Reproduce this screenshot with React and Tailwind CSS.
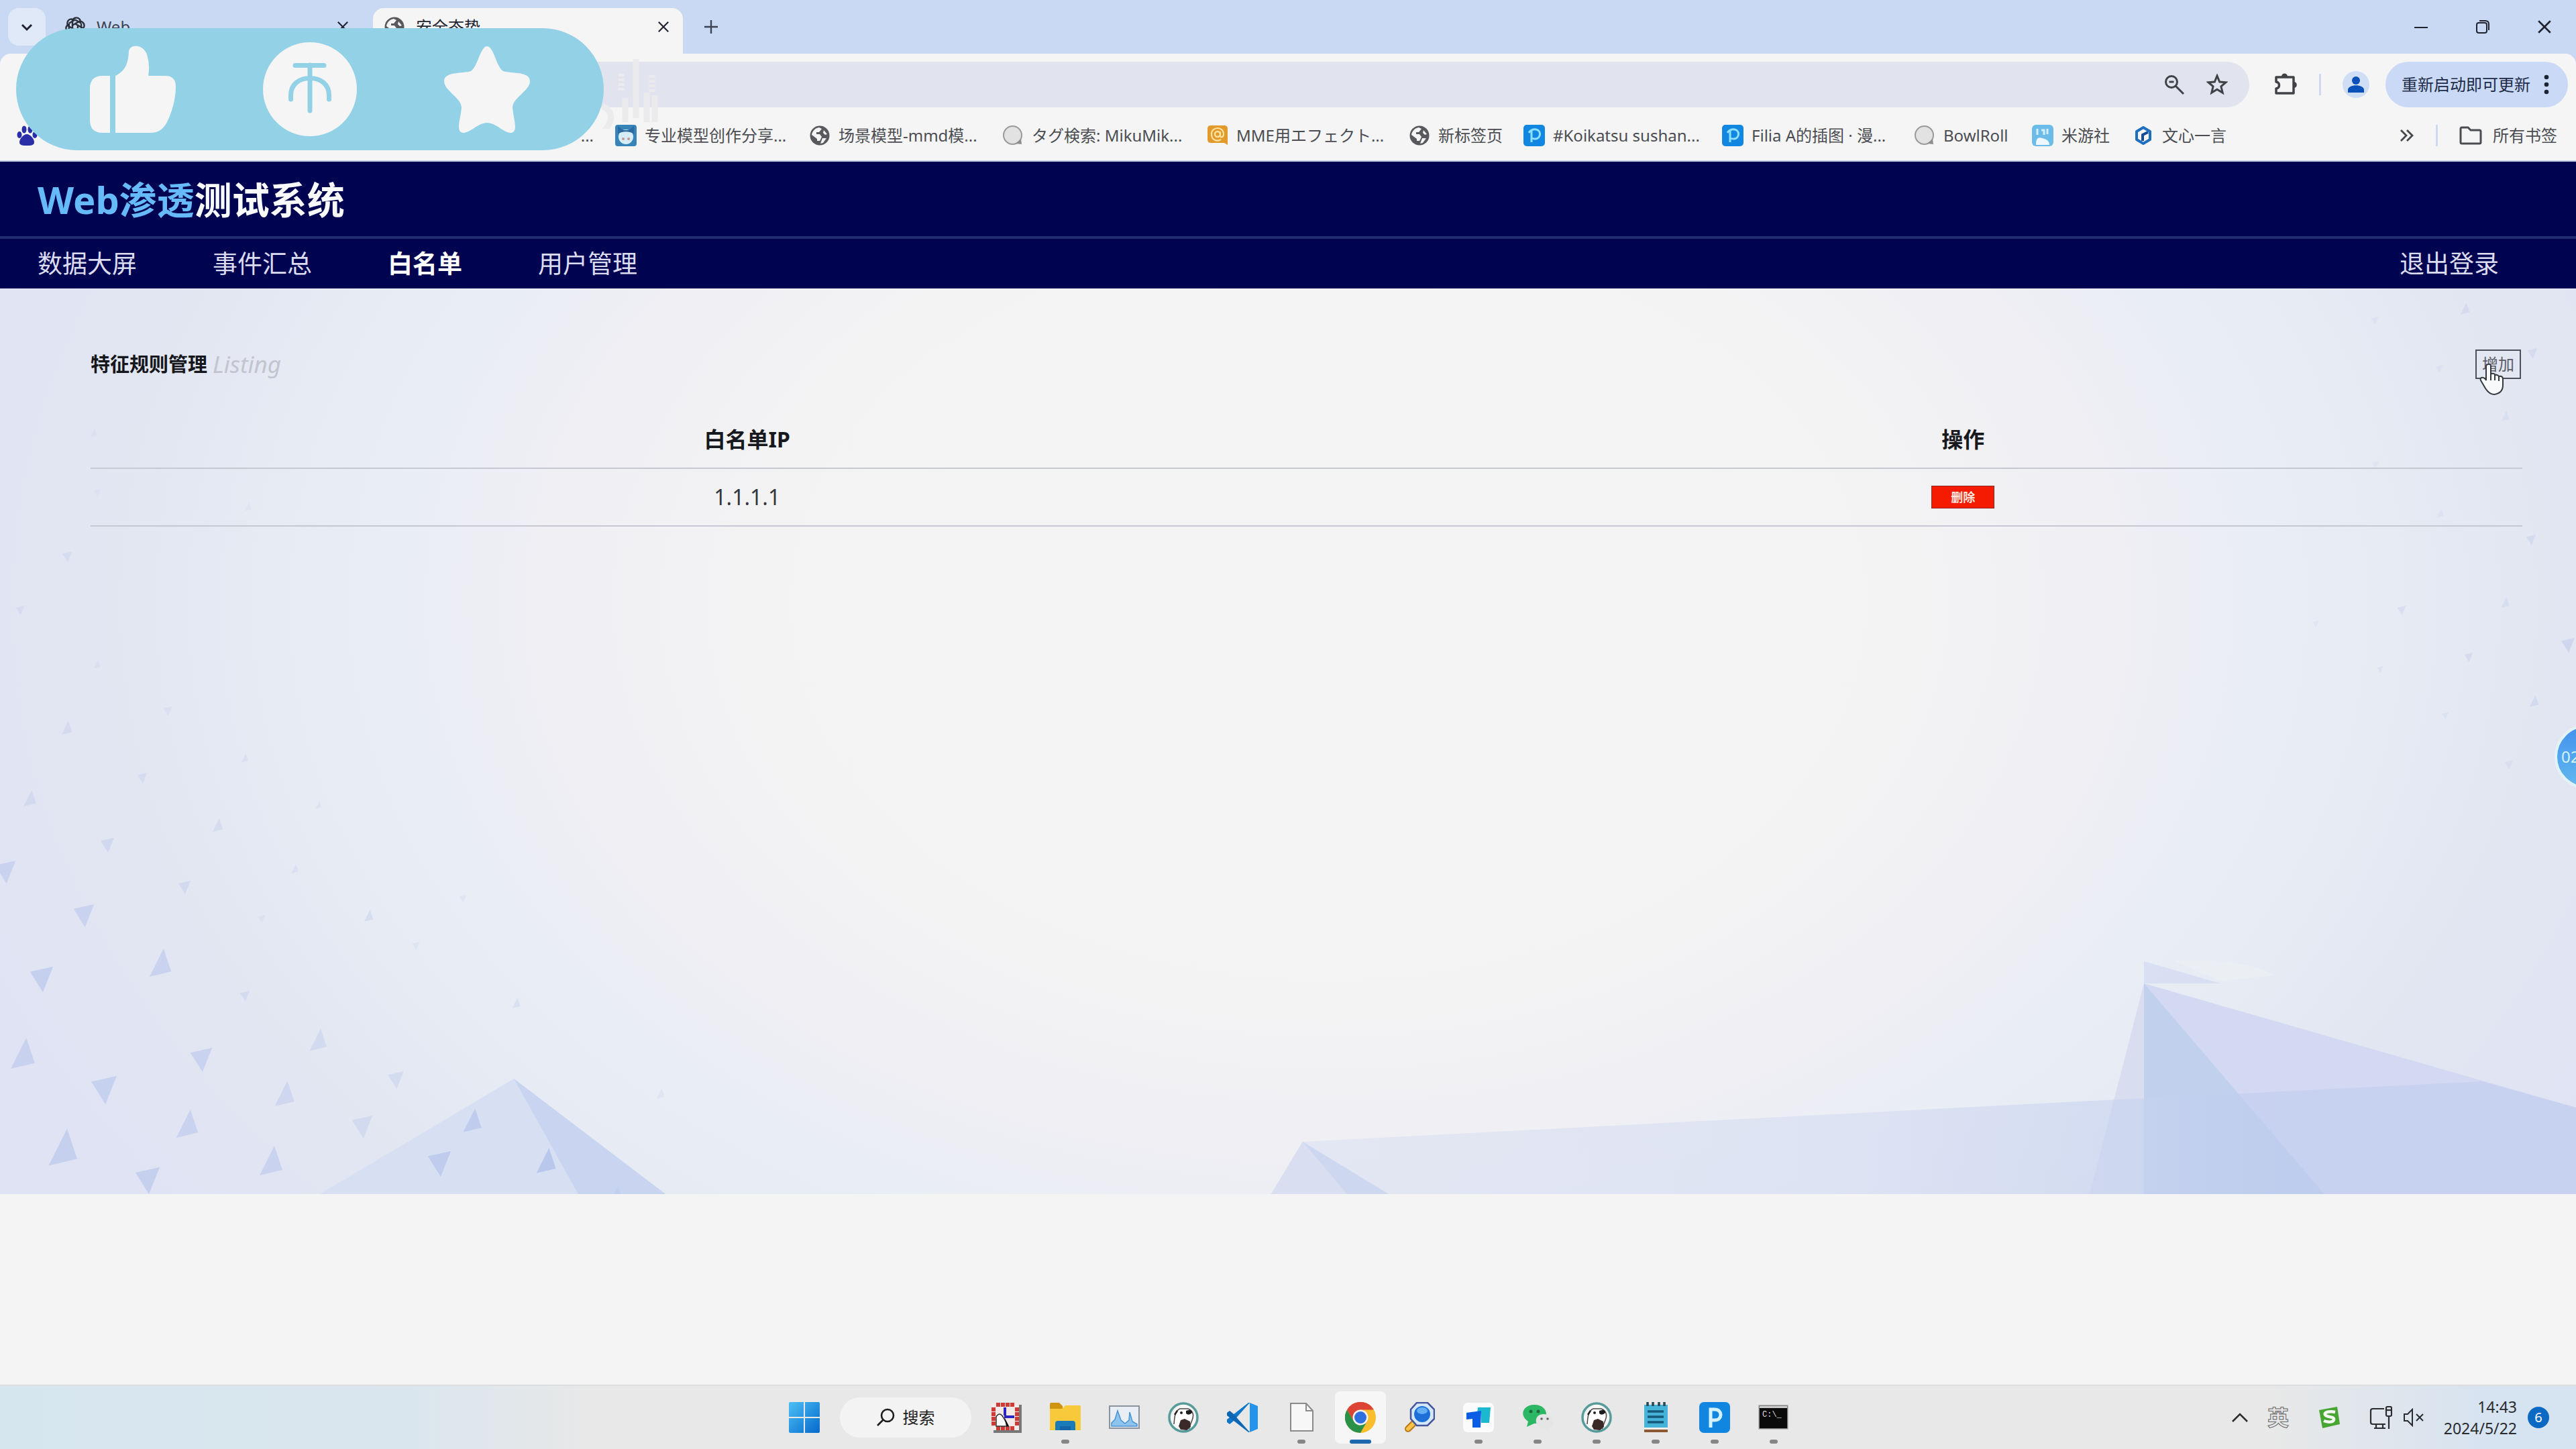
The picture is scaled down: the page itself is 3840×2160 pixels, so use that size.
import React from "react";

const FONT = "font-['Noto_Sans','Noto_Sans_CJK_SC',sans-serif]";

function Globe({ className }) {
  return (
    <svg viewBox="0 0 32 32" className={className}>
      <circle cx="16" cy="16" r="14.5" fill="#57595d" />
      <path d="M15 4c-6 1-10 5-11 11l8 6v3h4l3-6-3-4h-5v-3h4l4-5-4-2Z" fill="#f4f4f4" />
      <path d="M22 8l5 6-3 1-3-3 1-4ZM20 20l6 0-5 7-4 1 3-8Z" fill="#f4f4f4" />
    </svg>
  );
}

function Bubble({ className }) {
  return (
    <svg viewBox="0 0 32 32" className={className}>
      <circle cx="15.5" cy="15.5" r="13.5" fill="#e2e2e2" stroke="#9a9a9a" strokeWidth="2" />
      <path d="M20 28l9 1-1-8Z" fill="#8e8e8e" />
    </svg>
  );
}

function Pixiv({ className }) {
  return (
    <svg viewBox="0 0 32 32" className={className}>
      <rect width="32" height="32" rx="5" fill="#1287e2" />
      <path d="M8 12c3-5 8-6 11-5 8 2 7 13-1 14-2 0-4 0-6-1" fill="none" stroke="#8fe0ff" strokeWidth="3" />
      <path d="M12 8v18" stroke="#8fe0ff" strokeWidth="3" />
    </svg>
  );
}

function Mascot({ className }) {
  return (
    <svg viewBox="0 0 32 32" className={className}>
      <rect width="32" height="32" rx="4" fill="#3684b8" />
      <circle cx="16" cy="18" r="11" fill="#d6ecf7" />
      <path d="M4 2l8 6h8l8-6v12c-5-5-19-5-24 0Z" fill="#2a6a9e" />
      <circle cx="12" cy="21" r="2" fill="#c29a90" />
      <circle cx="20" cy="21" r="2" fill="#c29a90" />
    </svg>
  );
}

function AtSign({ className }) {
  return (
    <svg viewBox="0 0 32 32" className={className}>
      <path d="M6 1h20q5 0 5 5v24l-5-3H6q-5 0-5-5V6q0-5 5-5Z" fill="#e39a2c" />
      <circle cx="16" cy="14" r="4" fill="none" stroke="#ffe3a0" strokeWidth="2.4" />
      <path d="M20 10v6c0 4 5 3 5-2 0-12-18-12-18 0 0 10 9 11 14 8" fill="none" stroke="#ffe3a0" strokeWidth="2.2" />
    </svg>
  );
}

function Miyou({ className }) {
  return (
    <svg viewBox="0 0 32 32" className={className}>
      <rect width="32" height="32" rx="6" fill="#6cbcea" />
      <path d="M6 30c0-10 3-12 10-10 6 2 10 4 10 10Z" fill="#eef7fc" />
      <path d="M8 6v9M14 8h4v7M23 6v8" stroke="#d4eefa" strokeWidth="3" fill="none" />
    </svg>
  );
}

function Hexagon({ className }) {
  return (
    <svg viewBox="0 0 32 32" className={className}>
      <path d="M16 4l10 6v12l-10 6-10-6V10Z" fill="none" stroke="#1e6fc0" strokeWidth="4" strokeLinejoin="round" />
      <path d="M15 24V15l8-4" fill="none" stroke="#174a96" strokeWidth="4" />
    </svg>
  );
}

const bookmarks = [
  { icon: Mascot, label: "专业模型创作分享...", w: "w-[289px]" },
  { icon: Globe, label: "场景模型-mmd模...", w: "w-[288px]" },
  { icon: Bubble, label: "タグ検索: MikuMik...", w: "w-[305px]" },
  { icon: AtSign, label: "MME用エフェクト...", w: "w-[301px]" },
  { icon: Globe, label: "新标签页", w: "w-[171px]" },
  { icon: Pixiv, label: "#Koikatsu sushan...", w: "w-[296px]" },
  { icon: Pixiv, label: "Filia A的插图 · 漫...", w: "w-[286px]" },
  { icon: Bubble, label: "BowlRoll", w: "w-[176px]" },
  { icon: Miyou, label: "米游社", w: "w-[150px]" },
  { icon: Hexagon, label: "文心一言", w: "w-[150px]" },
];

function Cross({ className }) {
  return (
    <svg viewBox="0 0 20 20" className={className}>
      <path d="M2 2l16 16M18 2L2 18" stroke="currentColor" strokeWidth="2.4" />
    </svg>
  );
}

function TabStrip() {
  return (
    <div className="flex h-20 items-center bg-[#c9d9f3] pl-3 text-[#1f2430]">
      <button aria-label="搜索标签页" className="flex h-14 w-14 items-center justify-center rounded-2xl bg-[#e0e9f7]">
        <svg viewBox="0 0 20 20" className="h-5 w-5">
          <path d="M3 7l7 7 7-7" fill="none" stroke="currentColor" strokeWidth="3" />
        </svg>
      </button>
      <div className="flex w-[488px] items-center pr-9 pl-7">
        <svg viewBox="0 0 32 32" className="h-8 w-8" fill="none" stroke="#2b2f38" strokeWidth="2.4">
          {[0, 60, 120, 180, 240, 300].map((a) => (
            <path key={a} transform={`rotate(${a} 16 16)`} d="M12 18V8c0-5 7-8 11-3 1 2 1 3 1 5l-8-4.500" />
          ))}
        </svg>
        <span className="ml-4 flex-1 text-2xl leading-8 text-[#3c4250]">Web</span>
        <button aria-label="关闭 Web">
          <Cross className="h-[18px] w-[18px]" />
        </button>
      </div>
      <div className="mt-3 flex h-[68px] w-[462px] items-center rounded-t-2xl bg-[#f5f5f5] pr-5 pb-3 pl-4">
        <Globe className="h-8 w-8" />
        <span className="ml-4 flex-1 text-2xl leading-8">安全态势</span>
        <button aria-label="关闭 安全态势">
          <Cross className="h-[18px] w-[18px]" />
        </button>
      </div>
      <button aria-label="新建标签页" className="ml-8">
        <svg viewBox="0 0 20 20" className="h-5 w-5">
          <path d="M10 0v20M0 10h20" stroke="#3c4250" strokeWidth="2.400" />
        </svg>
      </button>
      <div className="ml-auto flex items-center gap-[70px] pr-9">
        <button aria-label="最小化">
          <svg viewBox="0 0 22 22" className="h-[22px] w-[22px]">
            <path d="M1 12h20" stroke="currentColor" strokeWidth="2" />
          </svg>
        </button>
        <button aria-label="还原">
          <svg viewBox="0 0 22 22" className="h-[22px] w-[22px]" fill="none" stroke="currentColor" strokeWidth="2">
            <rect x="2" y="5" width="15" height="15" rx="3" />
            <path d="M6 2h9q5 0 5 5v9" />
          </svg>
        </button>
        <button aria-label="关闭">
          <Cross className="h-[22px] w-[22px]" />
        </button>
      </div>
    </div>
  );
}

function Toolbar() {
  return (
    <div className="bg-[#c9d9f3]">
      <div className="flex h-[92px] items-center rounded-t-2xl bg-[#f5f5f5] pr-3 pl-60 text-[#3f4247]">
        <div className="flex h-[68px] flex-1 items-center rounded-full bg-[#e1e4ee] pr-8">
          <input aria-label="地址" className="h-full min-w-0 flex-1 bg-transparent pl-6 text-2xl outline-none" />
          <button aria-label="缩放">
            <svg viewBox="0 0 32 32" className="h-8 w-8" fill="none" stroke="currentColor" strokeWidth="3">
              <circle cx="12" cy="12" r="8.500" />
              <path d="M18.500 18.500L30 30M8.500 12h7" />
            </svg>
          </button>
          <button aria-label="为此标签页添加书签" className="ml-8">
            <svg viewBox="0 0 32 32" className="h-8 w-8">
              <path
                d="M16 3l3.700 9 9.500.7-7.300 6.200 2.300 9.300-8.200-5-8.200 5 2.300-9.300L2.800 12.700l9.500-.7Z"
                fill="none"
                stroke="currentColor"
                strokeWidth="3"
              />
            </svg>
          </button>
        </div>
        <button aria-label="扩展程序" className="ml-9">
          <svg viewBox="0 0 36 36" className="h-9 w-9">
            <path d="M4 7h26v24H4v-7c6-1 6-9 0-10Z" fill="none" stroke="currentColor" strokeWidth="3.500" strokeLinejoin="round" />
            <path d="M12 6c0-6 9-6 9 0ZM31 14c5 0 5 9 0 9Z" fill="currentColor" />
          </svg>
        </button>
        <span className="ml-8 h-8 w-[3px] bg-[#cddaf2]" />
        <button aria-label="个人资料" className="ml-8 flex h-10 w-10 items-center justify-center rounded-full bg-[#d0def5]">
          <svg viewBox="0 0 26 26" className="h-[26px] w-[26px]" fill="#0b50b8">
            <circle cx="13" cy="7" r="6" />
            <path d="M1 25v-4c0-9 24-9 24 0v4Z" />
          </svg>
        </button>
        <button className="ml-6 flex h-[68px] items-center rounded-full bg-[#cadaf6] pr-7 pl-6 text-2xl leading-8 text-[#1d2b47]">
          重新启动即可更新
          <svg viewBox="0 0 8 30" className="ml-5 h-[30px] w-2" fill="#1d2333">
            <circle cx="4" cy="4" r="3.300" />
            <circle cx="4" cy="15" r="3.300" />
            <circle cx="4" cy="26" r="3.300" />
          </svg>
        </button>
      </div>
    </div>
  );
}

function Bookmarks() {
  return (
    <div className="flex h-[69px] items-center border-b-2 border-[#c3cfe6] bg-[#f4f5f4] pr-7 pb-2 pl-6 text-2xl leading-8 text-[#4b4d52]">
      <svg viewBox="0 0 32 32" className="h-8 w-8 shrink-0" fill="#2a2fa8">
        <ellipse cx="5" cy="15" rx="3.500" ry="5" />
        <ellipse cx="12" cy="7" rx="3.500" ry="5.500" />
        <ellipse cx="21" cy="7" rx="3.500" ry="5.500" />
        <ellipse cx="28" cy="15" rx="3.500" ry="5" />
        <path d="M16 14c5 0 11 7 11 12s-6 5-11 5-11 0-11-5 6-12 11-12Z" />
      </svg>
      <span className="w-[861px] shrink-0 pr-8 text-right">...</span>
      {bookmarks.map(({ icon: Icon, label, w }) => (
        <a key={label} href="#" className={`flex shrink-0 items-center gap-3 whitespace-nowrap ${w}`}>
          <Icon className="h-8 w-8 shrink-0" />
          {label}
        </a>
      ))}
      <button aria-label="更多书签" className="ml-auto">
        <svg viewBox="0 0 22 20" className="h-5 w-[22px]" fill="none" stroke="#46484d" strokeWidth="2.800">
          <path d="M2 2l8 8-8 8M11 2l8 8-8 8" />
        </svg>
      </button>
      <span className="ml-8 h-8 w-[3px] bg-[#cddaf2]" />
      <a href="#" className="ml-8 flex items-center gap-4">
        <svg viewBox="0 0 34 28" className="h-7 w-[34px]">
          <path d="M2 4q0-2 2-2h9l4 4h13q2 0 2 2v16q0 2-2 2H4q-2 0-2-2Z" fill="none" stroke="#4b4d52" strokeWidth="3" />
        </svg>
        所有书签
      </a>
    </div>
  );
}

function Reactions() {
  return (
    <div className="absolute top-[42px] left-6 z-10 flex h-[182px] w-[876px] items-center rounded-full bg-[#93d1e6] pl-[109px]">
      <button aria-label="点赞">
        <svg viewBox="133 67 130 132" className="h-[132px] w-[130px]" fill="#f5f5f5">
          <path d="M164 113h-11q-19 0-19 19v47q0 19 19 19h11Z" />
          <path d="M172 113c14-7 19-17 20-36 1-12 21-12 27 4q5 16 2 32h26q15 0 15 16c0 18-5 36-12 51q-8 18-26 18h-52Z" />
        </svg>
      </button>
      <button aria-label="投币" className="ml-[129px]">
        <svg viewBox="392 63 140 140" className="h-[140px] w-[140px]">
          <circle cx="462" cy="133" r="70" fill="#f5f5f5" />
          <g fill="none" stroke="#93d1e6" strokeWidth="7" strokeLinecap="round">
            <path d="M440 97.500h43M462 97v68M433.500 148v-6c0-16 12-25.500 28.500-25.500s28.500 9.500 28.500 25.500v6" />
          </g>
        </svg>
      </button>
      <button aria-label="收藏" className="ml-[129px]">
        <svg viewBox="660 67 130 132" className="h-[132px] w-[130px]" fill="#f5f5f5">
          <path d="M725 69c10 0 14 31 24 37 12 4 40 0 40 15 0 14-25 24-26 39 1 16 10 38-3 38-10 0-22-15-35-15s-25 15-35 15c-13 0-4-22-3-38-1-15-26-25-26-39 0-15 28-11 40-15 10-6 14-37 24-37Z" />
        </svg>
      </button>
      <svg viewBox="0 0 96 110" className="absolute top-10 -right-[92px] h-[110px] w-24" fill="none" stroke="#ebebed">
        <path d="M2 76c16 8 18 22 0 40M36 100V64M52 94V6M68 100V56M80 100V60" strokeWidth="9" />
        <path d="M30 28v26M76 30v26" strokeWidth="9" strokeDasharray="4 3" />
      </svg>
    </div>
  );
}

function SiteHeader() {
  const links = ["数据大屏", "事件汇总", "白名单", "用户管理"];
  return (
    <header className="bg-[#000350]">
      <div className="flex h-[111px] items-center px-14">
        <h1 className="text-[56px] leading-[72px] font-bold text-[#f8fafc]">
          <span className="text-[#66baf8]">Web渗透</span>测试系统
        </h1>
      </div>
      <nav className="flex h-[78px] items-center border-t-4 border-[#202d70] pr-[115px] pl-14 text-[37px] leading-[48px] text-[#dcdcf0]">
        <div className="flex gap-[113px]">
          {links.map((l) => (
            <a key={l} href="#" className={l === "白名单" ? "font-bold text-white" : ""}>
              {l}
            </a>
          ))}
        </div>
        <a href="#" className="ml-auto">
          退出登录
        </a>
      </nav>
    </header>
  );
}

// x, y, size, opacity of the scattered shards
const shards = [
  [100, 400, 16, 0.3], [30, 480, 14, 0.3], [140, 215, 12, 0.15], [145, 305, 12, 0.15], [370, 325, 12, 0.12], [145, 560, 12, 0.2],
  [250, 630, 14, 0.25], [100, 655, 18, 0.35], [212, 730, 16, 0.3], [45, 760, 22, 0.35], [365, 700, 12, 0.25], [325, 800, 18, 0.35],
  [160, 830, 22, 0.45], [475, 770, 10, 0.25], [8, 870, 34, 0.6], [275, 893, 20, 0.4], [440, 865, 12, 0.25], [125, 935, 34, 0.6],
  [550, 935, 16, 0.35], [390, 940, 12, 0.2], [240, 1005, 38, 0.6], [62, 1030, 38, 0.7], [365, 1055, 16, 0.35], [690, 910, 12, 0.2],
  [620, 980, 12, 0.2], [770, 1065, 14, 0.3], [475, 1120, 30, 0.4], [35, 1140, 42, 0.6], [300, 1150, 36, 0.6], [155, 1195, 42, 0.65],
  [590, 1180, 26, 0.4], [425, 1200, 34, 0.5], [540, 1250, 34, 0.4], [280, 1245, 38, 0.6], [705, 1240, 32, 0.8], [95, 1280, 50, 0.7],
  [405, 1300, 40, 0.6], [655, 1305, 38, 0.8], [815, 1300, 34, 1], [220, 1330, 40, 0.7], [985, 1200, 14, 0.2], [920, 1345, 14, 0.4],
  [3675, 30, 16, 0.35], [3540, 48, 12, 0.2], [3775, 97, 16, 0.35], [3636, 120, 12, 0.2], [3735, 190, 14, 0.25], [3541, 263, 12, 0.15],
  [3638, 335, 12, 0.2], [3773, 375, 16, 0.35], [3580, 480, 14, 0.3], [3735, 468, 14, 0.3], [3828, 532, 22, 0.5], [3680, 550, 14, 0.35],
  [3548, 568, 10, 0.25], [3778, 615, 16, 0.4], [3645, 637, 10, 0.25], [3740, 710, 14, 0.25], [3452, 500, 10, 0.2],
];

function Backdrop() {
  return (
    <svg viewBox="0 0 3840 1350" preserveAspectRatio="none" aria-hidden="true" className="absolute inset-0 h-full w-full">
      <defs>
        <radialGradient id="glow" gradientUnits="userSpaceOnUse" cx="0" cy="0" r="1" gradientTransform="translate(1980 470) scale(2150 1500)">
          <stop offset="0" stopColor="#f4f4f4" />
          <stop offset="0.4" stopColor="#f3f3f4" />
          <stop offset="0.55" stopColor="#efeff4" />
          <stop offset="0.68" stopColor="#e8edf5" />
          <stop offset="0.83" stopColor="#e3e7f2" />
          <stop offset="1" stopColor="#dfe3f3" />
        </radialGradient>
        <linearGradient id="floor" gradientUnits="userSpaceOnUse" x1="1895" y1="0" x2="3400" y2="0">
          <stop offset="0" stopColor="#dfe4f3" stopOpacity="0.7" />
          <stop offset="0.6" stopColor="#d8dff2" stopOpacity="0.75" />
          <stop offset="1" stopColor="#bccaee" stopOpacity="0.5" />
        </linearGradient>
      </defs>
      <rect width="3840" height="1350" fill="url(#glow)" />
      <path d="M766 1178L992 1350H477Z" fill="#d7dff2" />
      <path d="M766 1178L992 1350H862Z" fill="#c9d5f0" />
      {shards.map(([x, y, s, o]) => (
        <path
          key={`${x}-${y}`}
          d={
            (x + y) % 2
              ? `M${x + s * 0.1} ${y - s * 0.55}l${s * 0.3} ${s * 0.9}l${-s * 0.85} ${s * 0.2}Z`
              : `M${x - s * 0.45} ${y - s * 0.3}l${s * 0.9} ${-s * 0.2}l${-s * 0.4} ${s}Z`
          }
          fill="#b9c7ec"
          opacity={o}
        />
      ))}
      <path d="M3196 1003L3310 1036L3196 1036Z" fill="#d5dcf2" opacity="0.8" />
      <path d="M3240 1002q110-4 150 22l-80 8Z" fill="#eff1f4" opacity="0.6" />
      <path d="M3196 1036L3840 1221V1350H3196Z" fill="#d3d9f2" />
      <path d="M3196 1036V1350H3115Z" fill="#d8ddf0" />
      <path d="M3196 1036L3465 1350H3196Z" fill="#c1d1ed" />
      <path d="M1942 1272L3040 1215L3700 1182L3840 1221V1350H1895Z" fill="url(#floor)" />
      <path d="M1942 1272L2070 1350H1895Z" fill="#cdd7f0" />
      <path d="M1942 1272L2008 1350H1895Z" fill="#d9dff1" />
    </svg>
  );
}

function Page() {
  return (
    <main className="relative min-h-[1350px]">
      <Backdrop />
      <section className="relative pt-[90px] pr-20 pl-[135px]">
        <div className="flex h-[46px] items-center justify-between">
          <h2 className="flex items-center gap-2 text-[29px] leading-10 font-bold text-[#15171c]">
            特征规则管理
            <em className="text-[35px] font-normal text-[#c2c5d0]">Listing</em>
          </h2>
          <div className="relative mr-0.5">
            <button className="flex h-11 w-[68px] items-center justify-center border-2 border-[#4b505d] text-2xl leading-8 text-[#5b6068]">
              增加
            </button>
            <svg viewBox="0 0 40 52" className="absolute top-[18px] left-[5px] h-[52px] w-10">
              <path
                d="M14 4q4-1 4 3v12q1-2 4-1 2 0 3 2 3-1 5 2 5-1 6 3v10c0 9-6 13-13 14-5 0-9-3-13-9L3 28c-2-4 3-6 7-2l1 2V7q0-3 3-3Z"
                fill="#f7f9fa"
                stroke="#34383f"
                strokeWidth="2"
              />
              <path d="M18 19v9M24 19v9M30 22v7" stroke="#34383f" strokeWidth="2" />
            </svg>
          </div>
        </div>
        <table className="mt-[46px] w-full table-fixed border-collapse text-center text-[32px] leading-10 text-[#17191e]">
          <thead>
            <tr className="h-[86px] border-b-2 border-[#c6c9d1]">
              <th className="w-[54%] font-bold">白名单IP</th>
              <th className="font-bold">操作</th>
            </tr>
          </thead>
          <tbody>
            <tr className="h-[86px] border-b-2 border-[#c6c9d1]">
              <td className="text-[#33363d]">1.1.1.1</td>
              <td>
                <div className="flex justify-center">
                  <button className="flex h-[34px] w-[94px] items-center justify-center border border-[#8f2a20] bg-[#f51b00] text-lg leading-6 font-bold text-[#ffe9e0]">
                    删除
                  </button>
                </div>
              </td>
            </tr>
          </tbody>
        </table>
      </section>
    </main>
  );
}

/* Taskbar icons, all drawn on a 46x46 grid */
const Frame = ({ children }) => (
  <svg viewBox="0 0 46 46" className="h-[46px] w-[46px]">
    {children}
  </svg>
);

const Patience = () => (
  <Frame>
    <path d="M4 4h42v42H4Z" fill="#777" />
    <rect x="1" y="1" width="41" height="41" fill="#f4e9e6" />
    <path d="M8 4h27M8 39h27M4 8v27M39 8v27" stroke="#cf3a34" strokeWidth="6" strokeDasharray="6 1" />
    <path d="M21 8v12M8 22h10M20 22h15" stroke="#2a25c0" strokeWidth="4" />
    <path d="M8 22q5-8 10 0l8 14H8Z" fill="#fff" stroke="#333" strokeWidth="1.500" />
    <path d="M20 22l7 14h-4Z" fill="#111" />
  </Frame>
);
const Explorer = () => (
  <Frame>
    <path d="M0 3q0-2 2-2h12l5 5v8H0Z" fill="#cf950f" />
    <path d="M0 10h18l5-5h21q2 0 2 2v35H0Z" fill="#f8c93a" />
    <path d="M8 42V32q0-4 4-4h22q4 0 4 4v10Z" fill="#1b7ab8" />
    <path d="M15 42v-6h16v6Z" fill="#1564a8" />
  </Frame>
);
const Monitor = () => (
  <Frame>
    <rect x="1" y="6" width="44" height="33" fill="#e8eef4" stroke="#8d939c" strokeWidth="2" />
    <path d="M4 36V31l5-5 4-13 5 14 6 5 6-5 1-12 4 14 7 4v3Z" fill="#8cc4ee" stroke="#4c94d0" strokeWidth="1.500" />
  </Frame>
);
const Beaver = () => (
  <Frame>
    <circle cx="23" cy="23" r="21" fill="#f6f6f5" stroke="#579b9b" strokeWidth="3.500" />
    <path d="M9 33c1-10 1-20 9-23l12 0c8 3 9 10 6 17l-5 13" fill="#fff" stroke="#4b4747" strokeWidth="1.500" />
    <path d="M19 27l6-2 8 4 1 8-6 5-9-1-3-5Z" fill="#3a2b29" />
    <path d="M27 13q9-3 9 3-5 5-9 1Z" fill="#1c1c1c" />
    <circle cx="20" cy="16" r="2" fill="#222" />
    <path d="M14 13l-4 6" stroke="#222" strokeWidth="2.500" />
  </Frame>
);
const Code = () => (
  <Frame>
    <path d="M34 1L9 29l-5 4-4-3v-4l32-25Z" fill="#1276c8" />
    <path d="M34 45L9 17l-5-4-4 3v4l32 25Z" fill="#0b66b4" />
    <path d="M34 1l12 5v34l-12 5V1Z" fill="#2493ec" />
    <path d="M34 14L22 23l12 9Z" fill="#e8e8e8" />
  </Frame>
);
const Doc = () => (
  <Frame>
    <path d="M7 2h23l10 11v30H7Z" fill="#f7f7f7" stroke="#8a8a8a" strokeWidth="2" />
    <path d="M30 2v11h10" fill="none" stroke="#8a8a8a" strokeWidth="2" />
  </Frame>
);
const Chrome = () => (
  <Frame>
    <circle cx="23" cy="23" r="23" fill="#f9bd2d" />
    <path d="M3 11.500A23 23 0 0 1 43 11.500H23L13 28.700Z" fill="#dc4436" />
    <path d="M3 11.500A23 23 0 0 0 23 46L33 28.700L13 28.700Z" fill="#2b9048" />
    <circle cx="23" cy="23" r="11.500" fill="#f4f4f4" />
    <circle cx="23" cy="23" r="9" fill="#2f6fe0" />
  </Frame>
);
const Lens = () => (
  <Frame>
    <path d="M14 32L6 40" stroke="#b9791a" strokeWidth="10" strokeLinecap="round" />
    <path d="M13 33L6 40" stroke="#f8c24a" strokeWidth="6" strokeLinecap="round" />
    <path d="M19 1h16l10 10v14L35 35H19L10 25V11Z" fill="#d4e8f8" stroke="#46569c" strokeWidth="2.500" />
    <circle cx="27" cy="18" r="12" fill="#1f6fd8" />
    <ellipse cx="27" cy="13" rx="8" ry="5" fill="#64aef4" />
  </Frame>
);
const Todesk = () => (
  <Frame>
    <rect x="0" y="1" width="46" height="44" rx="7" fill="#fbfbfb" />
    <path d="M22 8h19l-2 23H27V17h-6Z" fill="#1cb8d0" />
    <path d="M5 16l22-3-1 25H14V25l-9 1Z" fill="#0b5de6" />
  </Frame>
);
const Wechat = () => (
  <Frame>
    <path d="M18 4c24 0 24 28 0 28l-11 5 2-8C-6 18 3 4 18 4Z" fill="#2cb764" />
    <path d="M32 18c19 0 18 18 8 21l1 5-6-4c-18 0-19-22-3-22Z" fill="#e4e6e5" />
    <g fill="#1c6a3c">
      <circle cx="13" cy="14" r="2.500" />
      <circle cx="24" cy="14" r="2.500" />
    </g>
    <g fill="#666">
      <circle cx="29" cy="25" r="1.800" />
      <circle cx="38" cy="25" r="1.800" />
    </g>
  </Frame>
);
const Notepad = () => (
  <Frame>
    <path d="M6 4h35v36H6Z" fill="#45b4d8" />
    <path d="M6 40h35v5H6Z" fill="#8d5a35" />
    <path d="M6 38h35v3H6Z" fill="#f4efe8" />
    <path d="M11 14h24M11 22h24M11 30h24" stroke="#17597c" strokeWidth="3.500" />
    <path d="M11 0v6M19 0v6M28 0v6M36 0v6" stroke="#2b4450" strokeWidth="3.500" />
  </Frame>
);
const PixivApp = () => (
  <Frame>
    <rect width="46" height="46" rx="7" fill="#1086e0" />
    <path d="M17 38V11h6c12 0 12 16 0 16h-6" fill="none" stroke="#d4f1ff" strokeWidth="5" />
  </Frame>
);
const Terminal = () => (
  <Frame>
    <rect x="1" y="5" width="43" height="35" fill="#0a0a0a" stroke="#a9a9a9" strokeWidth="1.500" />
    <path d="M2 6h41v3H2Z" fill="#c9c9c9" />
    <text x="6" y="22" fontSize="12" fill="#ddd" className="font-['Liberation_Mono',monospace]">
      C:\_
    </text>
  </Frame>
);

const apps = [
  { name: "接龙", icon: Patience },
  { name: "文件资源管理器", icon: Explorer, open: true },
  { name: "性能监视器", icon: Monitor },
  { name: "数据库", icon: Beaver },
  { name: "代码编辑器", icon: Code },
  { name: "文档", icon: Doc, open: true },
  { name: "浏览器", icon: Chrome, active: true },
  { name: "查找", icon: Lens },
  { name: "远程桌面", icon: Todesk, open: true },
  { name: "微信", icon: Wechat, open: true },
  { name: "数据库客户端", icon: Beaver, open: true },
  { name: "记事本", icon: Notepad, open: true },
  { name: "画图", icon: PixivApp, open: true },
  { name: "命令提示符", icon: Terminal, open: true },
];

function Taskbar() {
  return (
    <footer className="grid h-24 grid-cols-[1fr_auto_1fr] items-center border-t-2 border-[#dcdddf] bg-[linear-gradient(90deg,#d6e6ef_0%,#dae6ee_16%,#e8e8e8_23%,#e8e8e8_88%,#d6e3f1_97%)]">
      <span />
      <div className="flex items-center pl-0.5">
        <button aria-label="开始" className="flex w-[97px] justify-center pr-2">
          <svg viewBox="0 0 46 46" className="h-[46px] w-[46px]">
            <defs>
              <linearGradient id="win" x1="0" y1="0" x2="1" y2="1">
                <stop offset="0" stopColor="#4cc0f5" />
                <stop offset="1" stopColor="#0569cc" />
              </linearGradient>
            </defs>
            <path d="M2 0h20v22H0V2q0-2 2-2ZM24 0h20q2 0 2 2v20H24ZM0 24h22v22H2q-2 0-2-2ZM24 24h22v20q0 2-2 2H24Z" fill="url(#win)" />
          </svg>
        </button>
        <button className="mr-2 flex h-[60px] w-[196px] items-center justify-center gap-3 rounded-full bg-[#f3f3f3] text-2xl leading-8 text-[#1d1d1f]">
          <svg viewBox="0 0 28 28" className="h-7 w-7" fill="none" stroke="currentColor" strokeWidth="2.600">
            <circle cx="17" cy="11" r="9" />
            <path d="M10.500 17.500L2 26" />
          </svg>
          搜索
        </button>
        {apps.map(({ name, icon: Icon, open, active }) => (
          <button key={name} aria-label={name} className="relative flex h-[78px] w-[88px] items-center justify-center">
            <span className={`flex h-[78px] w-[76px] items-center justify-center rounded-lg ${active ? "bg-[#f6f6f6]" : ""}`}>
              <Icon />
            </span>
            {open && <span className="absolute bottom-0 left-[38px] h-1.5 w-3 rounded-full bg-[#858585]" />}
            {active && <span className="absolute bottom-0 left-7 h-1.5 w-8 rounded-full bg-[#1c67ad]" />}
          </button>
        ))}
      </div>
      <div className="flex items-center justify-end pr-10 text-[#2a2c30]">
        <button aria-label="显示隐藏的图标">
          <svg viewBox="0 0 26 18" className="h-[18px] w-[26px]">
            <path d="M2 15L13 4l11 11" fill="none" stroke="currentColor" strokeWidth="2.600" />
          </svg>
        </button>
        <button className="ml-7 text-[32px] leading-10 font-bold text-[#e8e8e8] [-webkit-text-stroke:1px_#666]">英</button>
        <svg viewBox="0 0 32 32" className="ml-11 h-8 w-8">
          <path d="M1 5L28 0l4 26-26 6Z" fill="#48a532" />
          <path d="M25 8c-8-2-17 0-15 4s14 2 13 7-10 4-15 2" fill="none" stroke="#f4f8f2" strokeWidth="4.500" />
        </svg>
        <svg viewBox="0 0 34 34" className="ml-11 h-[34px] w-[34px]" fill="none" stroke="currentColor" strokeWidth="2.200">
          <path d="M22 4H5Q2 4 2 7v17q0 3 3 3h19M10 27v6M20 27v6M7 33h17M29 16v18" />
          <rect x="25" y="1" width="8" height="14" rx="2" />
          <path d="M25 6h8" />
        </svg>
        <svg viewBox="0 0 32 28" className="ml-4 h-7 w-8" fill="none" stroke="currentColor" strokeWidth="2">
          <path d="M2 9h5l7-7v24l-7-7H2ZM20 9l10 10M30 9L20 19" />
        </svg>
        <div className="ml-6 w-[114px] text-right text-[23px] leading-8 whitespace-nowrap">
          <div>14:43</div>
          <div>2024/5/22</div>
        </div>
        <span className="ml-4 flex h-8 w-8 items-center justify-center rounded-full bg-[#0b69c4] text-xl leading-8 text-white">6</span>
      </div>
    </footer>
  );
}

export default function App() {
  return (
    <div className={`relative flex min-h-screen flex-col overflow-hidden bg-[#f4f4f4] ${FONT}`}>
      <TabStrip />
      <Toolbar />
      <Bookmarks />
      <Reactions />
      <SiteHeader />
      <Page />
      <div className="flex-1" />
      <Taskbar />
      <button className="absolute top-[1080px] -right-16 flex h-24 w-24 items-center rounded-full border-4 border-[#e2f3f8] bg-linear-to-b from-[#4392ee] to-[#62b8ec] pl-1.5 text-2xl leading-8 text-[#d4f2fc]">
        02
      </button>
    </div>
  );
}
